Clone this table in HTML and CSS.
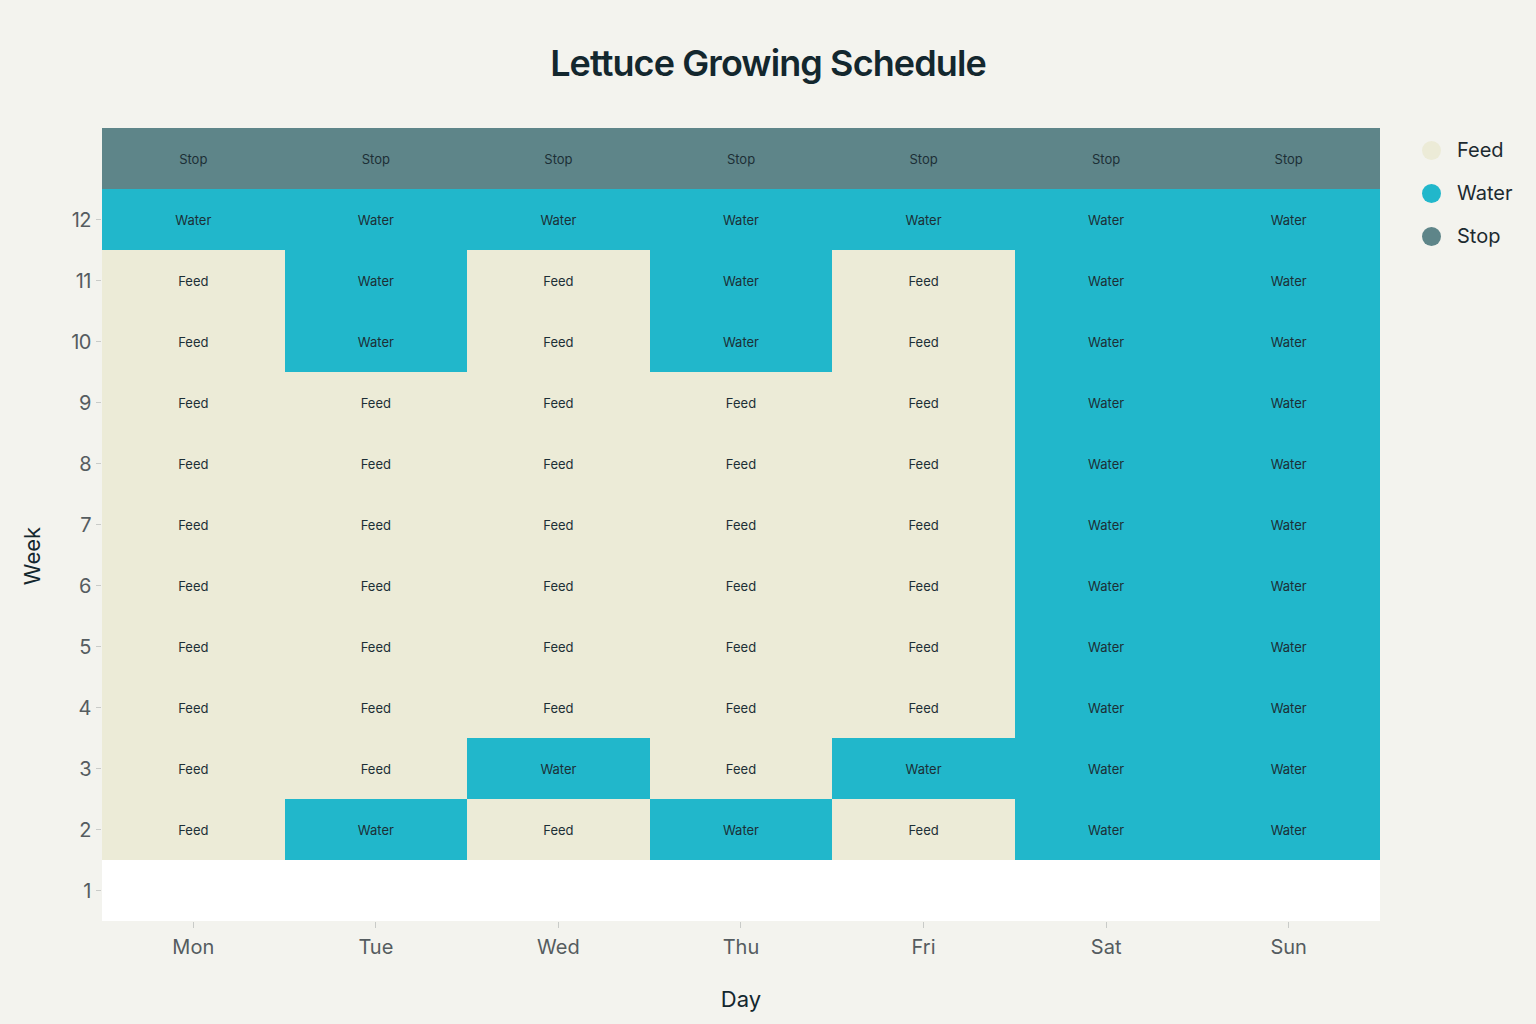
FILE: index.html
```html
<!DOCTYPE html>
<html>
<head>
<meta charset="utf-8">
<link rel="stylesheet" href="styles.css">
</head>
<body>
<div class="page">
  <h1 class="title">Lettuce Growing Schedule</h1>
  <div class="chart">
    <div class="yaxis">
      <div class="ytitle"><span>Week</span></div>
      <div class="yticks">
        <div class="ytick"></div>
        <div class="ytick"><span>12</span><i></i></div>
        <div class="ytick"><span>11</span><i></i></div>
        <div class="ytick"><span>10</span><i></i></div>
        <div class="ytick"><span>9</span><i></i></div>
        <div class="ytick"><span>8</span><i></i></div>
        <div class="ytick"><span>7</span><i></i></div>
        <div class="ytick"><span>6</span><i></i></div>
        <div class="ytick"><span>5</span><i></i></div>
        <div class="ytick"><span>4</span><i></i></div>
        <div class="ytick"><span>3</span><i></i></div>
        <div class="ytick"><span>2</span><i></i></div>
        <div class="ytick"><span>1</span><i></i></div>
      </div>
    </div>
    <div class="plot" id="plot"></div>
    <div class="legend">
      <div class="legend-item"><span class="dot feed"></span>Feed</div>
      <div class="legend-item"><span class="dot water"></span>Water</div>
      <div class="legend-item"><span class="dot stop"></span>Stop</div>
    </div>
    <div class="corner"></div>
    <div class="xaxis">
      <div class="xticks">
        <div class="xtick"><i></i><span>Mon</span></div>
        <div class="xtick"><i></i><span>Tue</span></div>
        <div class="xtick"><i></i><span>Wed</span></div>
        <div class="xtick"><i></i><span>Thu</span></div>
        <div class="xtick"><i></i><span>Fri</span></div>
        <div class="xtick"><i></i><span>Sat</span></div>
        <div class="xtick"><i></i><span>Sun</span></div>
      </div>
      <div class="xtitle">Day</div>
    </div>
  </div>
</div>
<script>
  var rows = [
    "SSSSSSS",
    "WWWWWWW",
    "FWFWFWW",
    "FWFWFWW",
    "FFFFFWW",
    "FFFFFWW",
    "FFFFFWW",
    "FFFFFWW",
    "FFFFFWW",
    "FFFFFWW",
    "FFWFWWW",
    "FWFWFWW",
    "......."
  ];
  var names = {S: ["stop", "Stop"], W: ["water", "Water"], F: ["feed", "Feed"], ".": ["empty", ""]};
  var plot = document.getElementById("plot");
  rows.forEach(function (r) {
    r.split("").forEach(function (c) {
      var d = document.createElement("div");
      d.className = "cell " + names[c][0];
      d.textContent = names[c][1];
      plot.appendChild(d);
    });
  });
</script>
</body>
</html>
```

FILE: styles.css
```css
html, body {
  margin: 0;
  padding: 0;
  background: #f3f3ee;
}
.page {
  width: 1536px;
  height: 1024px;
  font-family: Inter, "Liberation Sans", sans-serif;
}
.title {
  margin: 0;
  height: 128px;
  box-sizing: border-box;
  padding-top: 41px;
  text-align: center;
  font-size: 36px;
  font-weight: 600;
  letter-spacing: -0.9px;
  color: #13272e;
  line-height: 44px;
}
.chart {
  display: grid;
  grid-template-columns: 102px 1278px 156px;
  grid-template-rows: 793px 103px;
}
.yaxis {
  display: flex;
}
.ytitle {
  width: 64px;
  display: flex;
  align-items: center;
  justify-content: center;
  padding-top: 62px;
  box-sizing: border-box;
}
.ytitle span {
  transform: rotate(-90deg);
  font-size: 22px;
  color: #13272e;
  white-space: nowrap;
}
.yticks {
  flex: 1;
  display: grid;
  grid-template-rows: repeat(13, 61px);
}
.ytick {
  display: flex;
  align-items: center;
  justify-content: flex-end;
}
.ytick span {
  font-size: 20px;
  color: #555c60;
  margin-right: 5px;
  letter-spacing: -0.5px;
}
.ytick i {
  display: block;
  width: 5px;
  height: 1px;
  background: #c9cbc8;
  margin-right: 1px;
}
.plot {
  display: grid;
  grid-template-columns: repeat(7, 1fr);
  grid-template-rows: repeat(13, 61px);
}
.cell {
  display: flex;
  align-items: center;
  justify-content: center;
  font-size: 13px;
  color: #1c2f36;
  padding-top: 1px;
  box-sizing: border-box;
}
.cell.stop { background: #5e8589; }
.cell.water { background: #21b7cb; }
.cell.feed { background: #ecebd7; }
.cell.empty { background: #ffffff; }
.legend {
  padding: 10px 0 0 42px;
  display: flex;
  flex-direction: column;
  gap: 19px;
}
.legend-item {
  display: flex;
  align-items: center;
  font-size: 20px;
  color: #1c2a30;
  height: 24px;
}
.dot {
  width: 19px;
  height: 19px;
  border-radius: 50%;
  margin-right: 16px;
  display: inline-block;
}
.dot.feed { background: #ecebd7; }
.dot.water { background: #21b7cb; }
.dot.stop { background: #5e8589; }
.xaxis {
  display: flex;
  flex-direction: column;
}
.xticks {
  display: grid;
  grid-template-columns: repeat(7, 1fr);
}
.xtick {
  display: flex;
  flex-direction: column;
  align-items: center;
}
.xtick i {
  display: block;
  width: 1px;
  height: 6px;
  background: #c9cbc8;
  margin-top: 1px;
}
.xtick span {
  font-size: 20px;
  color: #555c60;
  margin-top: 7px;
  line-height: 24px;
}
.xtitle {
  text-align: center;
  font-size: 22px;
  color: #13272e;
  margin-top: 27px;
  line-height: 26px;
}
```
